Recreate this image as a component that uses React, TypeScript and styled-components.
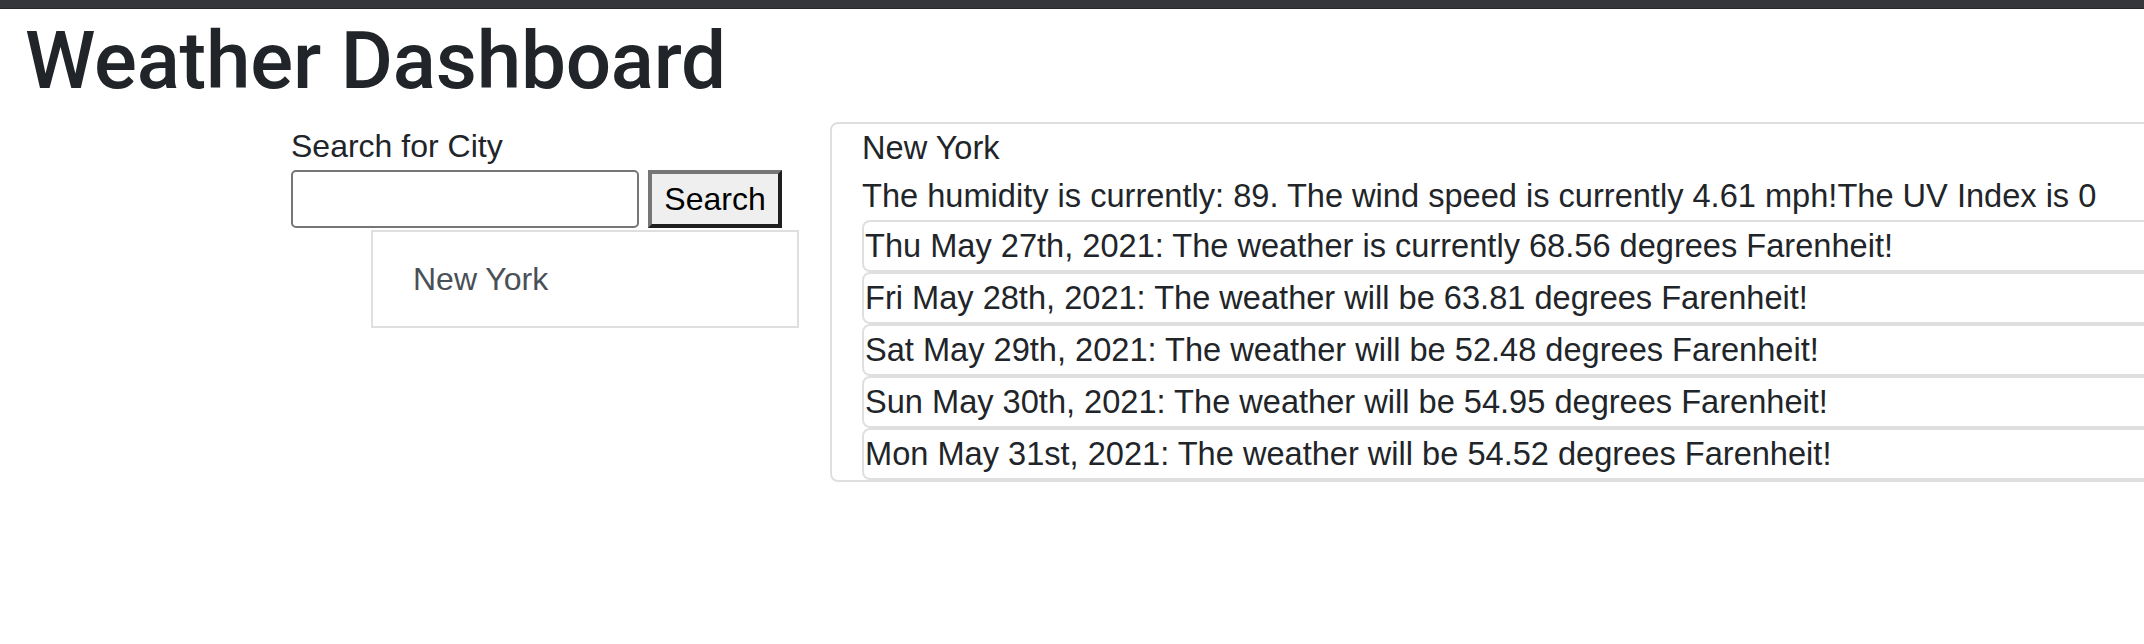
import React from "react";
import styled, { createGlobalStyle } from "styled-components";

const GlobalStyle = createGlobalStyle`
  html, body {
    margin: 0;
    padding: 0;
    background: #ffffff;
    overflow: hidden;
  }
  body {
    font-family: "Liberation Sans", Arial, sans-serif;
    font-size: 32px;
    line-height: 48px;
    color: #212529;
  }
  * { box-sizing: border-box; }
`;

const Page = styled.div`
  width: 2144px;
  height: 644px;
  overflow: hidden;
`;

const TopBar = styled.div`
  height: 9px;
  background: #36373b;
  border-bottom: 1px solid #28292c;
`;

const Container = styled.div`
  padding: 0 0 0 30px;
`;

const Title = styled.h1`
  margin: 4px 0 13px -5px;
  font-family: Roboto, "Liberation Sans", sans-serif;
  font-weight: 500;
  font-size: 80px;
  line-height: 96px;
  color: #212529;
  letter-spacing: -0.2px;
`;

const Row = styled.div`
  display: flex;
  align-items: flex-start;
  padding-left: 261px;
  gap: 31px;
`;

const SearchColumn = styled.div`
  width: 508px;
  flex: none;
  display: flex;
  flex-direction: column;
`;

const Label = styled.label`
  font-size: 32px;
  line-height: 48px;
  margin-bottom: 0;
`;

const SearchForm = styled.form`
  display: flex;
  gap: 9px;
  margin: 0;
`;

const Input = styled.input`
  width: 348px;
  height: 58px;
  border: 2px solid #767676;
  border-radius: 5px;
  background: #fff;
  font-size: 32px;
  padding: 0 6px;
  outline: none;
`;

const Button = styled.button`
  width: 134px;
  height: 58px;
  background: #efefef;
  border-style: solid;
  border-width: 4px;
  border-color: #767676 #1f1f1f #1f1f1f #767676;
  font-family: "Liberation Sans", Arial, sans-serif;
  font-size: 32px;
  color: #000;
  padding: 0;
  line-height: 1;
`;

const SuggestionList = styled.ul`
  list-style: none;
  margin: 2px 0 0;
  padding: 0 0 0 80px;
`;

const SuggestionItem = styled.li`
  border: 2px solid #dfdfdf;
  padding: 23px 40px;
  color: #495057;
  font-size: 32px;
  line-height: 48px;
`;

const Card = styled.div`
  flex: none;
  width: 1400px;
  border: 2px solid #dfdfdf;
  border-radius: 8px;
  padding: 0 0 0 30px;
  font-size: 32.6px;
`;

const Line = styled.div`
  white-space: nowrap;
`;

const ForecastRow = styled.div`
  border: 2px solid #dfdfdf;
  border-radius: 8px;
  padding: 0 0 0 1px;
  white-space: nowrap;
`;

const forecast = [
  "Thu May 27th, 2021: The weather is currently 68.56 degrees Farenheit!",
  "Fri May 28th, 2021: The weather will be 63.81 degrees Farenheit!",
  "Sat May 29th, 2021: The weather will be 52.48 degrees Farenheit!",
  "Sun May 30th, 2021: The weather will be 54.95 degrees Farenheit!",
  "Mon May 31st, 2021: The weather will be 54.52 degrees Farenheit!",
];

export default function App() {
  return (
    <Page>
      <GlobalStyle />
      <TopBar />
      <Container>
        <Title>Weather Dashboard</Title>
        <Row>
          <SearchColumn>
            <Label htmlFor="city">Search for City</Label>
            <SearchForm onSubmit={(e) => e.preventDefault()}>
              <Input id="city" type="text" />
              <Button type="submit">Search</Button>
            </SearchForm>
            <SuggestionList>
              <SuggestionItem>New York</SuggestionItem>
            </SuggestionList>
          </SearchColumn>
          <Card>
            <Line>New York</Line>
            <Line>
              The humidity is currently: 89. The wind speed is currently 4.61 mph!The UV Index is 0
            </Line>
            {forecast.map((f) => (
              <ForecastRow key={f}>{f}</ForecastRow>
            ))}
          </Card>
        </Row>
      </Container>
    </Page>
  );
}
